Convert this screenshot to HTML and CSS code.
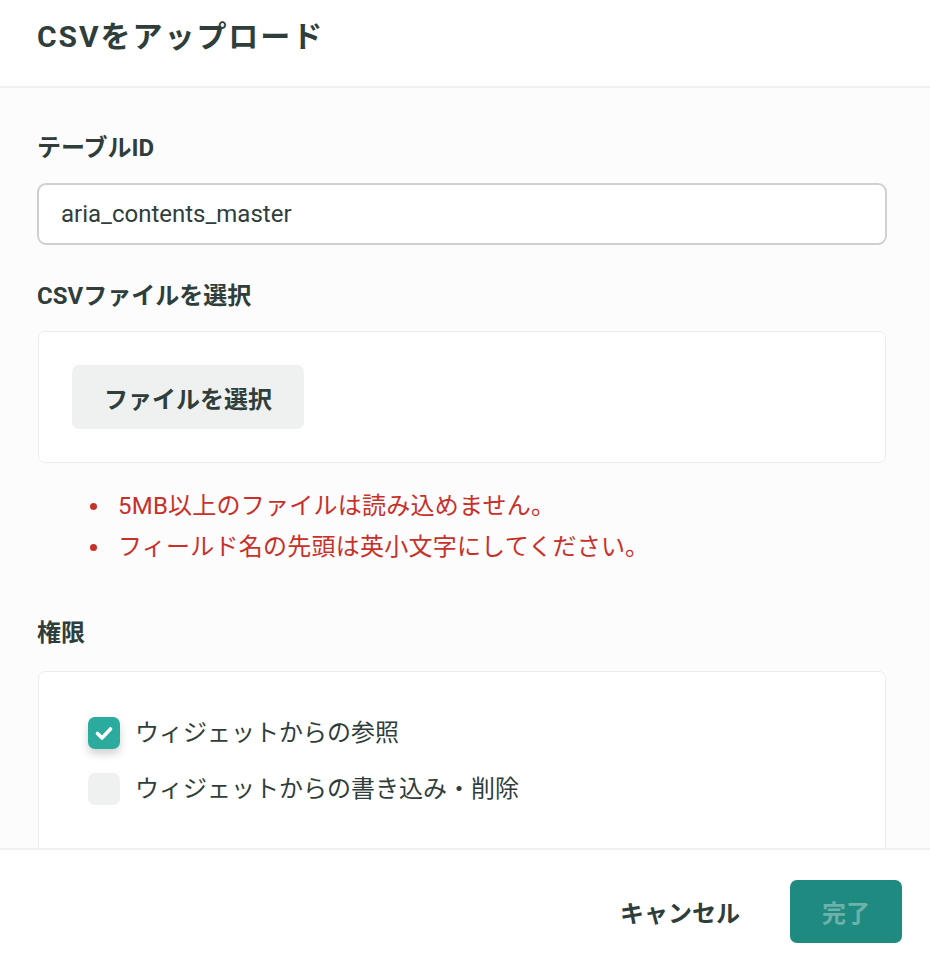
FILE: index.html
```html
<!DOCTYPE html>
<html lang="ja">
<head>
    <meta charset="UTF-8">
    <meta name="viewport" content="width=device-width, initial-scale=1.0">
    <title>CSVをアップロード</title>
    <link rel="stylesheet" href="styles.css">
</head>
<body>
    <div class="modal">
        <div class="modal-header">
            <h1>CSVをアップロード</h1>
        </div>

        <div class="modal-body">
            <label class="field-label" for="tableId">テーブルID</label>
            <input type="text" id="tableId" class="text-input" value="aria_contents_master">

            <div class="field-label">CSVファイルを選択</div>
            <div class="panel file-panel">
                <button class="file-button">ファイルを選択</button>
            </div>

            <ul class="errors">
                <li>5MB以上のファイルは読み込めません。</li>
                <li>フィールド名の先頭は英小文字にしてください。</li>
            </ul>

            <div class="field-label perm-label">権限</div>
            <div class="panel perm-panel">
                <label class="check-row">
                    <span class="check checked">
                        <svg width="22" height="22" viewBox="0 0 22 22">
                            <path d="M4.5 11.5l4.5 4.5 8.5-9" fill="none" stroke="#fff" stroke-width="3.6" stroke-linecap="round" stroke-linejoin="round"/>
                        </svg>
                    </span>
                    ウィジェットからの参照
                </label>
                <label class="check-row">
                    <span class="check"></span>
                    ウィジェットからの書き込み・削除
                </label>
            </div>
        </div>

        <div class="modal-footer">
            <button class="btn-cancel">キャンセル</button>
            <button class="btn-done" disabled>完了</button>
        </div>
    </div>
</body>
</html>
```

FILE: styles.css
```css
body {
    margin: 0;
    font-family: Roboto, "Noto Sans CJK JP", sans-serif;
    color: #2f3e3b;
    background: #fff;
}
.modal {
    display: flex;
    flex-direction: column;
    height: 100vh;
    overflow: hidden;
}
.modal-header {
    height: 86px;
    border-bottom: 2px solid #f0f0f0;
    padding: 0 37px;
    display: flex;
    align-items: center;
    flex-shrink: 0;
}
.modal-header h1 {
    margin: 0 0 18px;
    font-size: 30px;
    letter-spacing: 0.065em;
    font-weight: 700;
}
.modal-body {
    flex: 1;
    overflow: hidden;
    padding: 42px 43px 0 37px;
    background: #fcfcfc;
}
.field-label {
    display: block;
    font-size: 24px;
    font-weight: 700;
    line-height: 36px;
    margin-bottom: 17px;
}
.text-input {
    display: block;
    width: 100%;
    box-sizing: border-box;
    height: 62px;
    border: 2px solid #d0d0d0;
    border-radius: 9px;
    padding: 0 22px;
    font-family: inherit;
    font-size: 24px;
    color: #2f3e3b;
    background: #fff;
    margin-bottom: 33px;
}
.panel {
    background: #fff;
    border: 1px solid #ececec;
    border-radius: 7px;
    margin: 0 1px;
}
.file-panel {
    padding: 33px;
}
.file-button {
    height: 64px;
    padding: 0 32px;
    border: none;
    border-radius: 7px;
    background: #eff1f1;
    font-family: inherit;
    font-size: 24px;
    font-weight: 700;
    color: #2f3e3b;
}
.errors {
    list-style: none;
    margin: 23px 0 0;
    padding: 0;
    color: #c8302a;
    font-size: 24px;
    letter-spacing: 0.01em;
    line-height: 41px;
}
.errors li {
    display: flex;
    align-items: center;
}
.errors li::before {
    content: "";
    width: 7px;
    height: 7px;
    border-radius: 50%;
    background: #c8302a;
    margin: 0 21px 0 53px;
}
.perm-label {
    margin-top: 47px;
    margin-bottom: 20px;
}
.perm-panel {
    padding: 45px 49px 60px;
    display: flex;
    flex-direction: column;
    gap: 24px;
}
.check-row {
    display: flex;
    align-items: center;
    gap: 15px;
    font-size: 24px;
    line-height: 32px;
}
.check {
    width: 32px;
    height: 32px;
    border-radius: 7px;
    background: #eff1f1;
    display: flex;
    align-items: center;
    justify-content: center;
}
.check.checked {
    background: #2aab9d;
    box-shadow: 0 5px 8px rgba(0, 0, 0, 0.18);
}
.modal-footer {
    height: 122px;
    flex-shrink: 0;
    border-top: 2px solid #f0f0f0;
    display: flex;
    align-items: center;
    justify-content: flex-end;
    gap: 26px;
    padding: 0 28px;
    background: #fff;
}
.modal-footer button {
    height: 63px;
    border: none;
    border-radius: 7px;
    font-family: inherit;
    font-size: 24px;
    font-weight: 700;
}
.btn-cancel {
    background: none;
    color: #2f3e3b;
    padding: 0 24px;
}
.btn-done {
    background: #1f8a7f;
    color: rgba(255, 255, 255, 0.35);
    padding: 0 32px;
}
```
